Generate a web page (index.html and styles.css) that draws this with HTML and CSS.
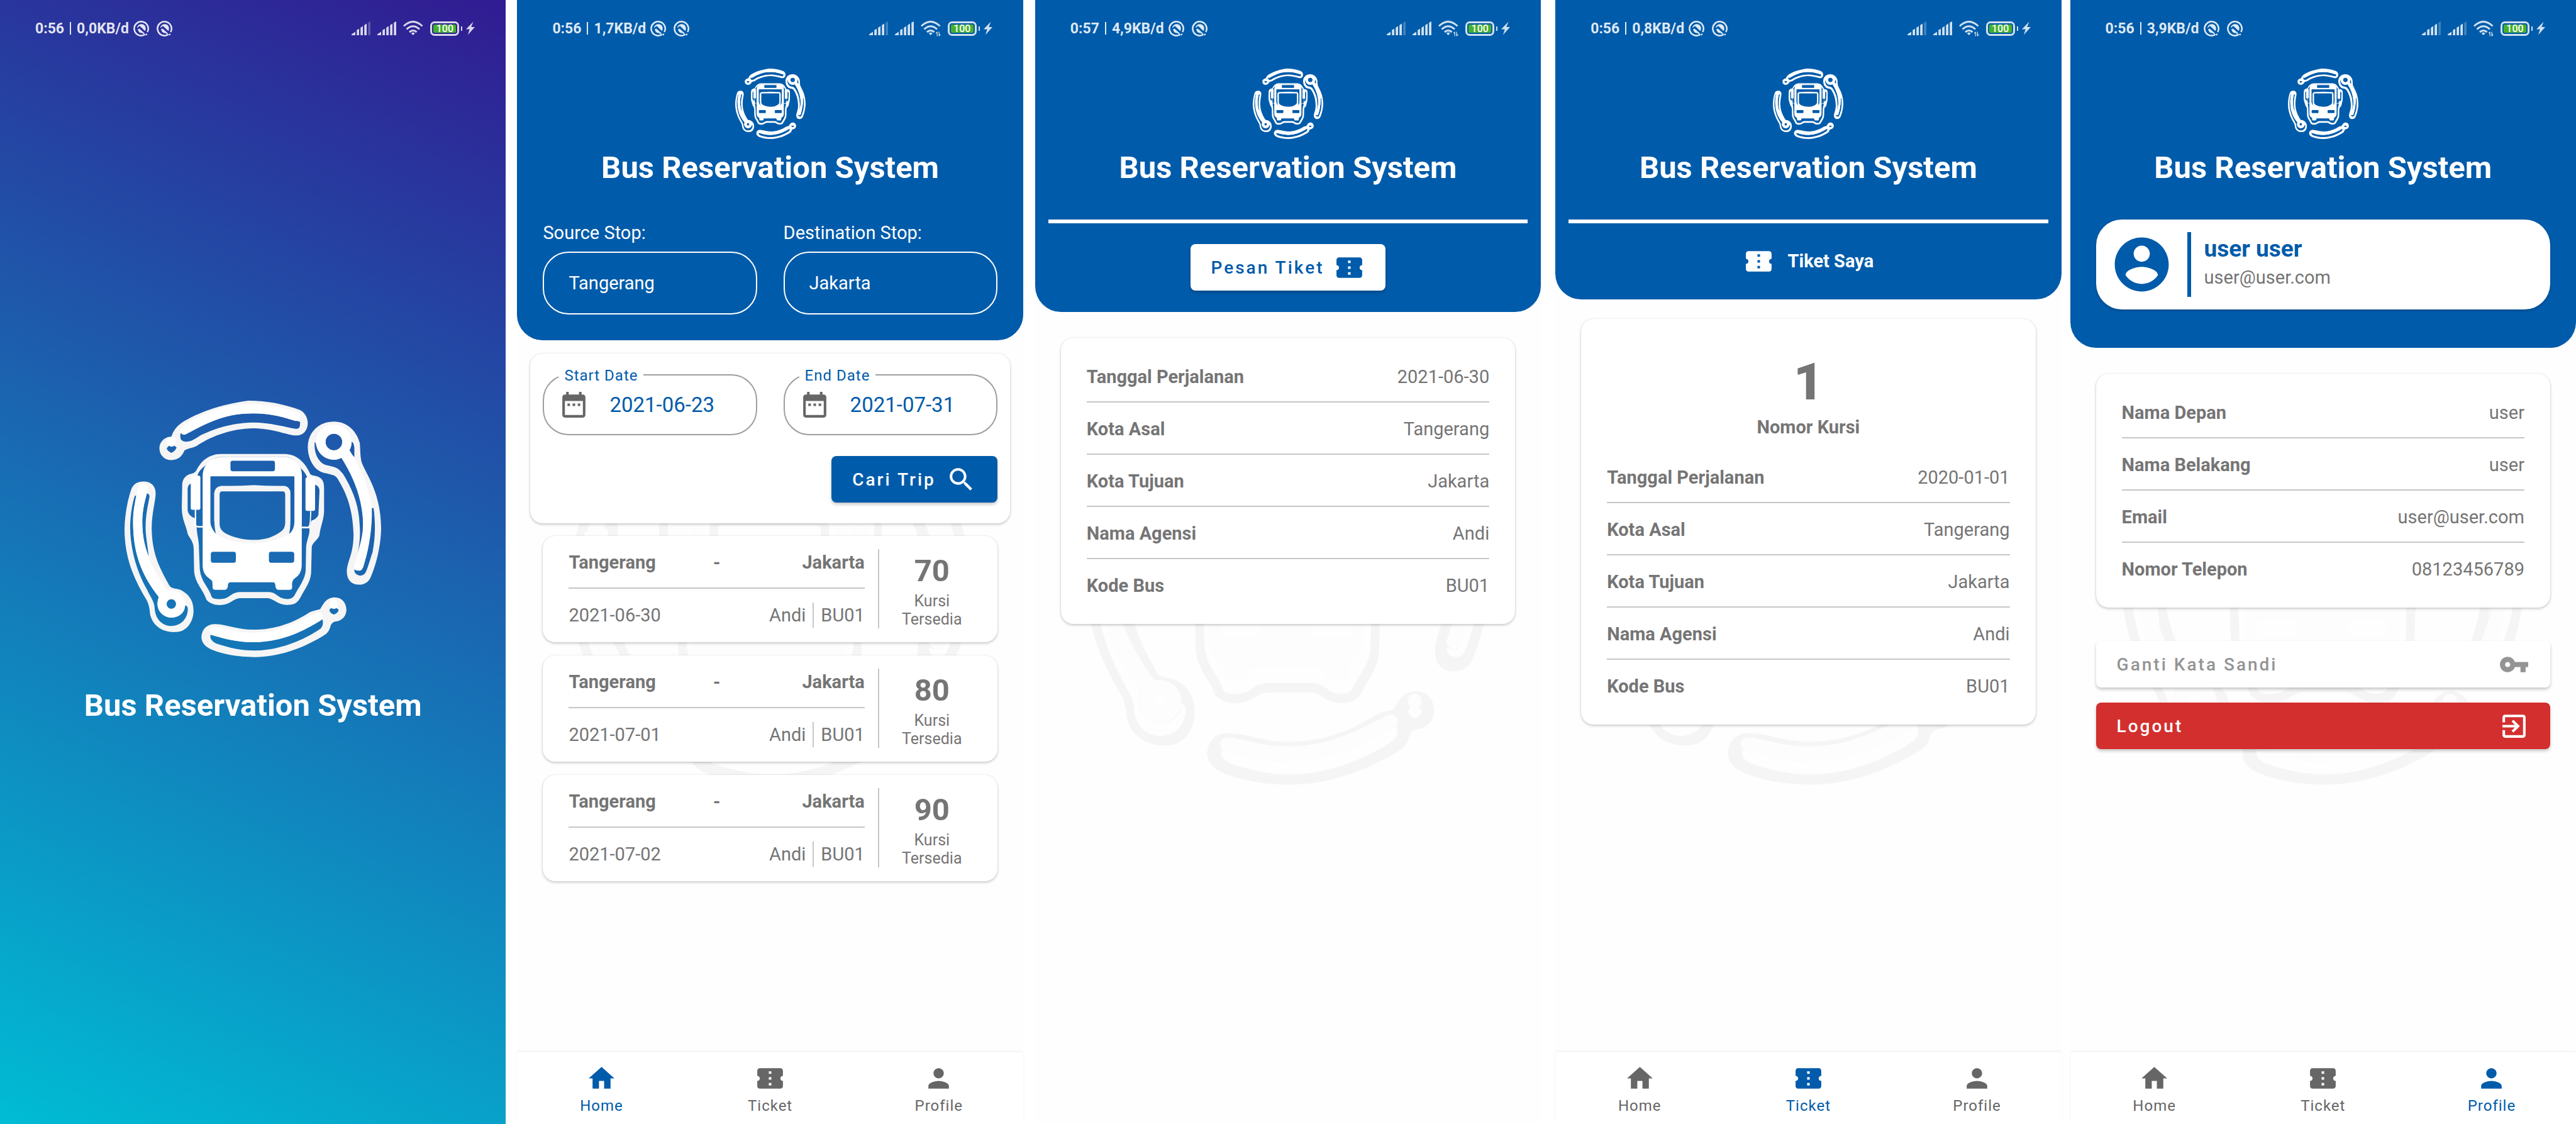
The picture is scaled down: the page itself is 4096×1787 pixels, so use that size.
FILE: index.html
```html
<!DOCTYPE html>
<html lang="id">
<head>
<meta charset="utf-8">
<title>Bus Reservation System</title>
<link rel="stylesheet" href="styles.css">
</head>
<body>
<svg class="defs" aria-hidden="true">
  <symbol id="logo" viewBox="148 107 1228 1106" preserveAspectRatio="none">
    <g class="logo-line" fill-rule="evenodd">
      <path d="M372 262Q385 225 420 203C500 158 600 125 740 107C830 107 910 122 985 146C1010 156 1025 178 1025 205C1023 240 1000 258 965 257C930 256 860 226 760 226C660 228 570 258 505 295C480 313 455 310 435 322C422 348 405 363 372 363C338 363 315 340 315 312C315 285 340 262 372 262ZM415 250C500 205 620 162 762 162C850 162 920 180 975 195Q985 195 988 200Q990 232 968 228C920 222 850 201 760 201C650 203 570 232 515 255C480 275 465 285 440 284Q415 282 415 262ZM350 312L362 300Q373 310 385 300L397 308Q395 320 373 332Q352 325 350 312Z"/>
      <path d="M1150 197C1215 197 1260 240 1274 290C1277 320 1275 340 1282 370C1300 420 1376 500 1376 660C1374 740 1350 820 1325 870C1315 890 1295 900 1270 900C1235 900 1212 880 1212 845C1212 800 1245 770 1244 680C1240 580 1215 510 1165 440C1150 420 1110 425 1080 410C1045 390 1025 350 1025 305C1027 240 1080 197 1150 197ZM1058 285L1063 290C1070 330 1100 360 1150 362C1170 362 1180 355 1185 352L1200 368C1260 440 1295 560 1289 650C1287 700 1270 740 1263 765C1275 720 1277 680 1273 640C1270 560 1240 490 1195 425C1165 385 1140 395 1100 380C1065 360 1055 320 1058 285ZM1233 283Q1245 285 1248 310L1248 350Q1232 335 1224 325Q1222 315 1233 300ZM1332 570L1340 570C1350 640 1348 700 1335 760C1320 800 1312 830 1300 850C1290 865 1262 865 1250 848L1247 835Q1262 842 1280 838Q1290 830 1297 800C1320 740 1330 650 1332 570ZM1110 285A40 36 0 1 0 1190 285A40 36 0 1 0 1110 285Z"/>
      <path d="M240 455C275 455 297 475 297 505C297 540 278 590 278 660C280 760 310 820 360 900C375 925 400 910 430 930C465 950 480 980 478 1020C475 1065 440 1105 395 1104C330 1108 280 1075 270 1025C268 1000 265 985 250 960C190 870 148 780 148 660C150 590 165 530 180 490C190 465 210 455 240 455ZM197 518L205 515C190 580 188 600 189 640C192 740 215 850 313 950C305 965 305 985 306 990C310 1020 340 1042 372 1042C410 1042 437 1020 438 990Q450 990 451 1005C450 1050 415 1078 372 1078C330 1078 295 1050 292 1000C290 970 270 950 255 920C210 850 175 750 175 650C176 600 185 550 197 518ZM252 507Q265 505 268 520C260 560 248 600 249 660C250 700 262 750 263 778C240 720 233 680 233 630C233 590 243 540 252 507ZM349 983A23 21 0 1 0 395 983A23 21 0 1 0 349 983Z"/>
      <path d="M1153 955C1190 955 1210 980 1210 1010C1208 1040 1185 1058 1155 1059Q1142 1062 1135 1075C1130 1095 1122 1108 1105 1117C1020 1165 900 1212 770 1212C690 1212 620 1200 565 1180C535 1168 516 1150 516 1125C518 1090 545 1068 585 1070C640 1072 690 1094 760 1094C870 1094 950 1065 1020 1027C1050 1008 1070 1012 1085 1005C1100 985 1110 957 1153 955ZM560 1116C620 1130 680 1148 760 1148C880 1148 980 1110 1095 1050Q1103 1075 1085 1090C1020 1130 900 1184 770 1184C700 1184 650 1172 590 1155C565 1145 555 1132 560 1116ZM1128 1008L1138 1000Q1150 1006 1162 1000L1173 1008Q1170 1022 1150 1029Q1130 1022 1128 1008Z"/>
      <path d="M610 337H915C970 338 1010 370 1035 420C1040 432 1060 428 1075 435C1098 445 1103 460 1103 485V580C1103 620 1085 650 1080 690C1070 710 1045 720 1044 740L1041 850C1038 890 1010 920 990 955C975 980 960 988 920 987C880 985 860 960 835 958H700C665 960 660 985 605 988C575 988 555 980 540 965C525 920 485 895 481 840L479 745C478 710 455 695 450 680C445 650 422 620 422 570L424 470C425 440 445 425 475 420C495 415 490 400 520 370C550 345 580 337 610 337ZM620 349Q570 349 538 384Q500 410 497 430L465 465Q450 470 450 490V580Q455 605 485 614L493 652C495 690 505 710 504 740L508 830C512 885 550 910 562 945C565 960 580 962 605 962C655 962 650 935 700 932H840C880 935 880 960 925 962C940 962 955 960 965 940C985 905 1010 880 1015 840L1017 740C1018 710 1038 680 1032 657L1042 624Q1065 620 1076 600L1081 495Q1080 475 1062 470L1022 437Q1010 412 990 398C975 370 950 350 905 349Z"/>
      <path d="M610 474Q680 476 768 471Q850 476 915 474Q942 480 942 505V620Q942 660 935 684C880 710 830 722 768 722C700 722 640 710 585 682Q578 650 577 620V505Q580 478 610 474ZM615 498Q603 498 603 512V640Q604 665 630 678C670 697 720 707 768 707C820 707 860 695 895 672Q916 660 917 635V512Q917 498 905 498Z"/>
    </g>
    <g class="logo-solid" fill-rule="evenodd">
      <path d="M425 218C500 175 600 122 760 122C840 122 920 140 980 158Q992 168 986 185Q978 197 962 194C900 176 850 162 762 162C640 162 560 195 440 253Q420 258 415 238Q415 225 425 218Z"/>
      <circle cx="373" cy="284" r="21"/>
      <path d="M1065 285A85 76 0 1 0 1235 285A85 76 0 1 0 1065 285ZM1110 285A40 36 0 1 0 1190 285A40 36 0 1 0 1110 285Z"/>
      <path d="M1185 352L1226 322C1290 420 1330 500 1332 600C1330 690 1310 770 1290 825Q1280 842 1262 838Q1245 830 1248 815C1262 770 1290 720 1290 650C1290 530 1240 430 1185 352Z"/>
      <path d="M238 463Q260 465 260 485C255 520 233 560 233 635C235 740 270 820 355 925L313 955C220 850 190 750 189 640C190 580 200 530 212 485Q220 463 238 463Z"/>
      <path d="M306 983A66 59 0 1 0 438 983A66 59 0 1 0 306 983ZM349 983A23 21 0 1 0 395 983A23 21 0 1 0 349 983Z"/>
      <path d="M585 1082C640 1090 690 1107 765 1107C880 1105 950 1075 1065 1022Q1090 1012 1098 1035Q1100 1045 1085 1055C980 1115 880 1148 760 1148C690 1147 630 1135 570 1118Q553 1112 556 1095Q562 1080 585 1082Z"/>
      <circle cx="1150" cy="983" r="21"/>
      <rect x="465" y="430" width="46" height="147" rx="8"/>
      <rect x="1014" y="438" width="46" height="144" rx="8"/>
      <path d="M484 577H491V640Q491 647 500 647H524V654H500Q484 654 484 640ZM1036 583H1042Q1040 658 1030 657H996V650H1026Q1036 650 1036 583Z"/>
      <path d="M620 349H905C960 351 997 380 997 430L996 820Q995 855 960 875Q948 885 950 905Q952 922 940 922H885Q872 922 870 905Q870 892 860 890H655Q645 890 643 900Q643 920 630 922H585Q572 923 570 915L568 885C555 870 525 865 522 820V430C525 380 560 351 620 349ZM665 366Q655 366 655 376V402Q655 411 665 411H858Q868 411 868 402V376Q868 366 858 366ZM562 433Q559 433 559 437V630Q560 655 585 680C640 708 700 720 768 720C830 720 880 708 935 682Q960 665 961 630V437Q961 433 957 433ZM573 758Q561 758 561 768V795Q561 806 573 806H670Q681 806 681 795V768Q681 758 670 758ZM850 758Q839 758 839 768V795Q839 806 850 806H948Q960 806 960 795V768Q960 758 948 758Z"/>
    </g>
  </symbol>
  <symbol id="app-dot" viewBox="0 0 100 100">
    <path d="M75 87A44.500 44.500 0 1 1 89 72" fill="none" stroke="currentColor" stroke-width="10"/>
    <path d="M24 42A28 28 0 1 1 74 65L44 36Q38 32 33 38L25 46ZM28 54L38 50L72 80L66 86L56 78Q34 80 28 54ZM76 88L84 80L90 88L82 94Z" fill="currentColor"/>
  </symbol>
  <symbol id="signal" viewBox="0 0 120 88">
    <path d="M0 88V82L24 66V88ZM33 88V55L48 47V88ZM57 88V40L72 30V88ZM81 88V24L96 14V88Z" fill="currentColor"/>
    <path class="signal-last" d="M105 88V8L120 0V88Z" fill="currentColor"/>
  </symbol>
  <symbol id="wifi" viewBox="0 0 128 100">
    <g fill="none" stroke="currentColor" stroke-width="12"><path d="M4 34Q63 -22 122 34"/><path d="M22 54Q63 16 104 54"/><path d="M40 72Q63 52 86 72"/></g>
    <path d="M51 80Q63 68 75 80L63 92Z" fill="currentColor"/>
  </symbol>
  <symbol id="wifi-data" viewBox="0 0 128 100">
    <use href="#wifi" width="128" height="100"/>
    <path d="M102 98V70L94 80H102ZM107 98V70H102V98ZM114 70V98H119V70ZM119 98L128 86H119Z" fill="currentColor"/>
  </symbol>
  <symbol id="bolt" viewBox="0 0 58 88"><path d="M48 0L0 50H24L12 88L58 36H34Z" fill="currentColor"/></symbol>
  <symbol id="date" viewBox="0 0 24 24"><path fill="currentColor" d="M9 11H7v2h2v-2zm4 0h-2v2h2v-2zm4 0h-2v2h2v-2zm2-7h-1V2h-2v2H8V2H6v2H5c-1.110 0-1.990.9-1.990 2L3 20c0 1.100.89 2 2 2h14c1.100 0 2-.9 2-2V6c0-1.100-.9-2-2-2zm0 16H5V9h14v11z"/></symbol>
  <symbol id="search" viewBox="0 0 24 24"><path fill="currentColor" d="M15.500 14h-.79l-.28-.27C15.410 12.590 16 11.110 16 9.500 16 5.910 13.090 3 9.500 3S3 5.910 3 9.500 5.910 16 9.500 16c1.610 0 3.090-.59 4.230-1.570l.27.28v.79l5 4.990L20.490 19l-4.990-5zm-6 0C7.010 14 5 11.990 5 9.500S7.010 5 9.500 5 14 7.010 14 9.500 11.990 14 9.500 14z"/></symbol>
  <symbol id="ticket" viewBox="0 0 24 24"><path fill="currentColor" d="M22 10V6c0-1.110-.9-2-2-2H4c-1.100 0-1.990.89-1.990 2v4c1.100 0 1.990.9 1.990 2s-.89 2-2 2v4c0 1.100.9 2 2 2h16c1.100 0 2-.9 2-2v-4c-1.100 0-2-.9-2-2s.9-2 2-2zm-9 7.500h-2v-2h2v2zm0-4.500h-2v-2h2v2zm0-4.500h-2v-2h2v2z"/></symbol>
  <symbol id="home" viewBox="0 0 24 24"><path fill="currentColor" d="M10 20v-6h4v6h5v-8h3L12 3 2 12h3v8z"/></symbol>
  <symbol id="person" viewBox="0 0 24 24"><path fill="currentColor" d="M12 12c2.210 0 4-1.790 4-4s-1.790-4-4-4-4 1.790-4 4 1.790 4 4 4zm0 2c-2.670 0-8 1.340-8 4v2h16v-2c0-2.660-5.330-4-8-4z"/></symbol>
  <symbol id="account" viewBox="0 0 24 24"><path fill="currentColor" d="M12 2C6.480 2 2 6.480 2 12s4.480 10 10 10 10-4.480 10-10S17.520 2 12 2zm0 3c1.660 0 3 1.340 3 3s-1.340 3-3 3-3-1.340-3-3 1.340-3 3-3zm0 14.200c-2.500 0-4.710-1.280-6-3.220.03-1.990 4-3.080 6-3.080 1.990 0 5.970 1.090 6 3.080-1.290 1.940-3.500 3.220-6 3.220z"/></symbol>
  <symbol id="key" viewBox="0 0 24 24"><path fill="currentColor" d="M12.650 10C11.830 7.670 9.610 6 7 6c-3.310 0-6 2.690-6 6s2.690 6 6 6c2.610 0 4.830-1.670 5.650-4H17v4h4v-4h2v-4H12.650zM7 14c-1.100 0-2-.9-2-2s.9-2 2-2 2 .9 2 2-.9 2-2 2z"/></symbol>
  <symbol id="exit" viewBox="0 0 24 24"><path fill="currentColor" d="M10.090 15.590L11.500 17l5-5-5-5-1.410 1.410L12.670 11H3v2h9.670l-2.580 2.590zM19 3H5c-1.110 0-2 .9-2 2v4h2V5h14v14H5v-4H3v4c0 1.100.89 2 2 2h14c1.100 0 2-.9 2-2V5c0-1.100-.9-2-2-2z"/></symbol>
</svg>

<div class="board">
  <section class="phone splash">
    <div class="status">
      <span>0:56</span><i class="bar"></i><span class="rate">0,0KB/d</span>
      <svg class="dot"><use href="#app-dot"/></svg><svg class="dot"><use href="#app-dot"/></svg>
      <div class="indicators">
        <svg class="signal dim"><use href="#signal"/></svg><svg class="signal"><use href="#signal"/></svg>
        <svg class="wifi"><use href="#wifi"/></svg>
        <span class="battery"><b>100</b></span><svg class="bolt"><use href="#bolt"/></svg>
      </div>
    </div>
    <div class="splash-body">
      <svg class="splash-logo"><use href="#logo"/></svg>
      <h1 class="title">Bus Reservation System</h1>
    </div>
  </section>

  <section class="phone">
    <svg class="watermark" aria-hidden="true"><use href="#logo"/></svg>
    <header class="header">
      <div class="status">
        <span>0:56</span><i class="bar"></i><span class="rate">1,7KB/d</span>
        <svg class="dot"><use href="#app-dot"/></svg><svg class="dot"><use href="#app-dot"/></svg>
        <div class="indicators">
          <svg class="signal dim"><use href="#signal"/></svg><svg class="signal"><use href="#signal"/></svg>
          <svg class="wifi"><use href="#wifi-data"/></svg>
          <span class="battery"><b>100</b></span><svg class="bolt"><use href="#bolt"/></svg>
        </div>
      </div>
      <svg class="logo"><use href="#logo"/></svg>
      <h2 class="title">Bus Reservation System</h2>
      <div class="stops">
        <div class="stop"><label for="source">Source Stop:</label><input id="source" type="text" value="Tangerang"></div>
        <div class="stop"><label for="destination">Destination Stop:</label><input id="destination" type="text" value="Jakarta"></div>
      </div>
    </header>
    <main class="main home">
      <form class="card search">
        <div class="dates">
          <div class="date"><label for="start">Start Date</label><svg class="icon"><use href="#date"/></svg><input id="start" type="text" value="2021-06-23"></div>
          <div class="date"><label for="end">End Date</label><svg class="icon"><use href="#date"/></svg><input id="end" type="text" value="2021-07-31"></div>
        </div>
        <button class="button primary" type="button">Cari Trip<svg class="icon"><use href="#search"/></svg></button>
      </form>
      <ul class="trips">
        <li class="card trip">
          <div class="trip-info">
            <div class="route"><b>Tangerang</b><b>-</b><b>Jakarta</b></div>
            <div class="meta"><span>2021-06-30</span><span class="agency">Andi</span><span class="code">BU01</span></div>
          </div>
          <div class="seats"><b>70</b><span>Kursi Tersedia</span></div>
        </li>
        <li class="card trip">
          <div class="trip-info">
            <div class="route"><b>Tangerang</b><b>-</b><b>Jakarta</b></div>
            <div class="meta"><span>2021-07-01</span><span class="agency">Andi</span><span class="code">BU01</span></div>
          </div>
          <div class="seats"><b>80</b><span>Kursi Tersedia</span></div>
        </li>
        <li class="card trip">
          <div class="trip-info">
            <div class="route"><b>Tangerang</b><b>-</b><b>Jakarta</b></div>
            <div class="meta"><span>2021-07-02</span><span class="agency">Andi</span><span class="code">BU01</span></div>
          </div>
          <div class="seats"><b>90</b><span>Kursi Tersedia</span></div>
        </li>
      </ul>
    </main>
    <nav class="nav">
      <a class="active" href="#home"><svg class="icon"><use href="#home"/></svg>Home</a>
      <a href="#ticket"><svg class="icon"><use href="#ticket"/></svg>Ticket</a>
      <a href="#profile"><svg class="icon"><use href="#person"/></svg>Profile</a>
    </nav>
  </section>

  <section class="phone">
    <svg class="watermark" aria-hidden="true"><use href="#logo"/></svg>
    <header class="header">
      <div class="status">
        <span>0:57</span><i class="bar"></i><span class="rate">4,9KB/d</span>
        <svg class="dot"><use href="#app-dot"/></svg><svg class="dot"><use href="#app-dot"/></svg>
        <div class="indicators">
          <svg class="signal dim"><use href="#signal"/></svg><svg class="signal"><use href="#signal"/></svg>
          <svg class="wifi"><use href="#wifi-data"/></svg>
          <span class="battery"><b>100</b></span><svg class="bolt"><use href="#bolt"/></svg>
        </div>
      </div>
      <svg class="logo"><use href="#logo"/></svg>
      <h2 class="title">Bus Reservation System</h2>
      <hr class="rule">
      <button class="button light" type="button">Pesan Tiket<svg class="icon"><use href="#ticket"/></svg></button>
    </header>
    <main class="main">
      <dl class="card details">
        <div><dt>Tanggal Perjalanan</dt><dd>2021-06-30</dd></div>
        <div><dt>Kota Asal</dt><dd>Tangerang</dd></div>
        <div><dt>Kota Tujuan</dt><dd>Jakarta</dd></div>
        <div><dt>Nama Agensi</dt><dd>Andi</dd></div>
        <div><dt>Kode Bus</dt><dd>BU01</dd></div>
      </dl>
    </main>
  </section>

  <section class="phone">
    <svg class="watermark" aria-hidden="true"><use href="#logo"/></svg>
    <header class="header">
      <div class="status">
        <span>0:56</span><i class="bar"></i><span class="rate">0,8KB/d</span>
        <svg class="dot"><use href="#app-dot"/></svg><svg class="dot"><use href="#app-dot"/></svg>
        <div class="indicators">
          <svg class="signal dim"><use href="#signal"/></svg><svg class="signal"><use href="#signal"/></svg>
          <svg class="wifi"><use href="#wifi-data"/></svg>
          <span class="battery"><b>100</b></span><svg class="bolt"><use href="#bolt"/></svg>
        </div>
      </div>
      <svg class="logo"><use href="#logo"/></svg>
      <h2 class="title">Bus Reservation System</h2>
      <hr class="rule">
      <h3 class="heading"><svg class="icon"><use href="#ticket"/></svg>Tiket Saya</h3>
    </header>
    <main class="main tickets">
      <div class="card">
        <p class="seat"><strong>1</strong>Nomor Kursi</p>
        <dl class="details">
          <div><dt>Tanggal Perjalanan</dt><dd>2020-01-01</dd></div>
          <div><dt>Kota Asal</dt><dd>Tangerang</dd></div>
          <div><dt>Kota Tujuan</dt><dd>Jakarta</dd></div>
          <div><dt>Nama Agensi</dt><dd>Andi</dd></div>
          <div><dt>Kode Bus</dt><dd>BU01</dd></div>
        </dl>
      </div>
    </main>
    <nav class="nav">
      <a href="#home"><svg class="icon"><use href="#home"/></svg>Home</a>
      <a class="active" href="#ticket"><svg class="icon"><use href="#ticket"/></svg>Ticket</a>
      <a href="#profile"><svg class="icon"><use href="#person"/></svg>Profile</a>
    </nav>
  </section>

  <section class="phone">
    <svg class="watermark" aria-hidden="true"><use href="#logo"/></svg>
    <header class="header">
      <div class="status">
        <span>0:56</span><i class="bar"></i><span class="rate">3,9KB/d</span>
        <svg class="dot"><use href="#app-dot"/></svg><svg class="dot"><use href="#app-dot"/></svg>
        <div class="indicators">
          <svg class="signal dim"><use href="#signal"/></svg><svg class="signal dim"><use href="#signal"/></svg>
          <svg class="wifi"><use href="#wifi-data"/></svg>
          <span class="battery"><b>100</b></span><svg class="bolt"><use href="#bolt"/></svg>
        </div>
      </div>
      <svg class="logo"><use href="#logo"/></svg>
      <h2 class="title">Bus Reservation System</h2>
      <div class="user">
        <svg class="avatar"><use href="#account"/></svg>
        <div class="user-text"><strong>user user</strong><span>user@user.com</span></div>
      </div>
    </header>
    <main class="main">
      <dl class="card details">
        <div><dt>Nama Depan</dt><dd>user</dd></div>
        <div><dt>Nama Belakang</dt><dd>user</dd></div>
        <div><dt>Email</dt><dd>user@user.com</dd></div>
        <div><dt>Nomor Telepon</dt><dd>08123456789</dd></div>
      </dl>
      <div class="actions">
        <button class="button plain" type="button">Ganti Kata Sandi<svg class="icon"><use href="#key"/></svg></button>
        <button class="button danger" type="button">Logout<svg class="icon"><use href="#exit"/></svg></button>
      </div>
    </main>
    <nav class="nav">
      <a href="#home"><svg class="icon"><use href="#home"/></svg>Home</a>
      <a href="#ticket"><svg class="icon"><use href="#ticket"/></svg>Ticket</a>
      <a class="active" href="#profile"><svg class="icon"><use href="#person"/></svg>Profile</a>
    </nav>
  </section>
</div>
</body>
</html>
```
FILE: styles.css
```css
:root {
  --blue: #005baa;
  --text: #757575;
  --line: #c6c6c6;
}

* {
  box-sizing: border-box;
}

body {
  margin: 0;
  background: #fff;
  color: var(--text);
  font-family: Roboto, "Liberation Sans", sans-serif;
  font-size: 29px;
  line-height: 35px;
}

h1, h2, h3, p, ul, dl, dd {
  margin: 0;
  padding: 0;
}

button, input {
  font: inherit;
  color: inherit;
  margin: 0;
}

.defs {
  position: absolute;
  width: 0;
  height: 0;
}

/* Five screens side by side, with the gutters as tracks of their own */
.board {
  display: grid;
  grid-template-columns:
    minmax(0, 1fr) 18px minmax(0, 1fr) 19px minmax(0, 1fr)
    23px minmax(0, 1fr) 14px minmax(0, 1fr);
  min-height: 100vh;
}

.phone {
  position: relative;
  display: flex;
  flex-direction: column;
  background: #fefefe;
}

.phone:nth-child(2) { grid-column: 3; }
.phone:nth-child(3) { grid-column: 5; }
.phone:nth-child(4) { grid-column: 7; }
.phone:nth-child(5) { grid-column: 9; }

.icon {
  flex: none;
  width: 49px;
  height: 49px;
}

.logo-line { fill: var(--logo-line, #fff); }
.logo-solid { fill: var(--logo-solid, #fff); }

.watermark {
  --logo-line: #f5f5f5;
  --logo-solid: #fdfdfd;
  position: absolute;
  top: 609px;
  left: 0;
  right: 0;
  width: 639px;
  height: 639px;
  margin: 0 auto;
}

/* Status bar */
.status {
  display: flex;
  align-items: center;
  align-self: stretch;
  height: 26px;
  padding: 0 49px 0 56px;
  color: rgba(255, 255, 255, .88);
  font-size: 23px;
  font-weight: 700;
}

.bar {
  width: 2px;
  height: 20px;
  margin: 0 9px;
  background: currentColor;
}

.rate { margin-right: 7px; }

.dot {
  width: 25px;
  height: 25px;
  margin-right: 12px;
}

.indicators {
  display: flex;
  align-items: center;
  gap: 11px;
  margin-left: auto;
  color: rgba(255, 255, 255, .82);
}

.signal { width: 30px; height: 22px; }
.signal.dim { --last: .3; }
.signal-last { opacity: var(--last, 1); }
.wifi { width: 32px; height: 25px; }
.bolt { width: 14px; height: 22px; }

.battery {
  position: relative;
  width: 46px;
  height: 23px;
  padding: 2px;
  border: 3px solid currentColor;
  border-radius: 7px;
}

.battery b {
  display: block;
  border-radius: 2px;
  background: #45b02c;
  color: #fff;
  font-size: 16px;
  font-weight: 500;
  line-height: 13px;
  text-align: center;
}

.battery::after {
  content: "";
  position: absolute;
  top: 5px;
  right: -8px;
  width: 2px;
  height: 7px;
  background: currentColor;
}

/* Splash */
.splash {
  padding-top: 32px;
  background: linear-gradient(24deg, #00bcd4, #311b92);
}

.splash-body {
  flex: 1;
  display: flex;
  flex-direction: column;
  align-items: center;
  justify-content: center;
  gap: 48px;
  padding-bottom: 58px;
}

.splash-logo {
  --logo-line: #f5f5f5;
  width: 408px;
  height: 408px;
}

.title {
  color: #fff;
  font-size: 49px;
  font-weight: 700;
  line-height: 57px;
}

/* Header */
.header {
  position: relative;
  display: flex;
  flex-direction: column;
  align-items: center;
  padding-top: 32px;
  border-radius: 0 0 41px 41px;
  background: var(--blue);
  color: #fff;
}

.logo {
  width: 112px;
  height: 112px;
  margin: 51px 0 17px;
}

.header .title { margin-bottom: 54px; }

.stops {
  align-self: stretch;
  display: flex;
  gap: 42px;
  padding: 4px 41px 41px;
}

.stop {
  flex: 1;
  min-width: 0;
}

.stop label {
  display: block;
  margin-bottom: 12px;
}

.stop input {
  display: block;
  width: 100%;
  height: 100px;
  padding: 0 39px;
  border: 2px solid #fff;
  border-radius: 41px;
  background: none;
}

.rule {
  align-self: stretch;
  height: 6px;
  margin: 0 21px;
  border: 0;
  background: #fff;
}

.heading {
  display: flex;
  align-items: center;
  gap: 22px;
  padding: 36px 0;
  font-size: 29px;
  font-weight: 700;
}

.user {
  align-self: stretch;
  display: flex;
  gap: 21px;
  margin: 0 41px 61px;
  padding: 20px 21px;
  border-radius: 41px;
  background: #fff;
  box-shadow: 0 2px 4px rgba(0, 0, 0, .2);
  color: var(--blue);
}

.avatar {
  flex: none;
  width: 103px;
  height: 103px;
}

.user-text {
  display: flex;
  flex-direction: column;
  gap: 6px;
  padding: 5px 0 0 21px;
  border-left: 6px solid var(--blue);
}

.user-text strong {
  font-size: 37px;
  line-height: 44px;
}

.user-text span { color: var(--text); }

/* Content */
.main {
  position: relative;
  flex: 1;
  padding: 41px 41px 0;
}

.main.home { padding: 21px 21px 0; }
.main.tickets { padding-top: 31px; }

.card {
  border-radius: 20px;
  background: #fff;
  box-shadow: 0 2px 4px rgba(0, 0, 0, .2), 0 0 2px rgba(0, 0, 0, .12);
}

.search {
  display: flex;
  flex-direction: column;
  gap: 33px;
  padding: 33px 20px;
}

.dates {
  display: flex;
  gap: 42px;
}

.date {
  position: relative;
  flex: 1;
  display: flex;
  align-items: center;
  gap: 32px;
  min-width: 0;
  height: 97px;
  padding-left: 23px;
  border: 2px solid #9e9e9e;
  border-radius: 41px;
  color: #666;
}

.date label {
  position: absolute;
  top: -14px;
  left: 23px;
  padding: 0 9px;
  background: #fff;
  color: var(--blue);
  font-size: 24px;
  letter-spacing: 1px;
  line-height: 29px;
}

.date input {
  min-width: 0;
  padding: 0;
  border: 0;
  background: none;
  color: var(--blue);
  font-size: 33px;
}

.button {
  display: flex;
  align-items: center;
  justify-content: space-between;
  gap: 16px;
  height: 74px;
  padding: 0 33px;
  border: 0;
  border-radius: 8px;
  box-shadow: 0 3px 5px rgba(0, 0, 0, .22);
  font-size: 28px;
  font-weight: 500;
  letter-spacing: 3px;
}

.primary {
  align-self: flex-end;
  background: var(--blue);
  color: #fff;
}

.light {
  margin: 33px 0 34px;
  background: #fff;
  color: var(--blue);
}

.plain {
  background: #fff;
  color: #949494;
}

.danger {
  background: #d32f2f;
  color: #fff;
}

.trips {
  display: grid;
  gap: 21px;
  padding: 20px 20px 0;
  list-style: none;
}

.trip {
  display: flex;
  gap: 21px;
  padding: 21px 20px 22px 41px;
}

.trip-info { flex: 1; }

.route {
  display: grid;
  grid-template-columns: 1fr auto 1fr;
  padding: 4px 0 22px;
  border-bottom: 2px solid var(--line);
}

.route b:last-child { text-align: right; }

.meta {
  display: flex;
  padding-top: 22px;
  line-height: 40px;
}

.agency {
  margin-left: auto;
  padding-right: 11px;
}

.code {
  padding-left: 11px;
  border-left: 2px solid var(--line);
}

.seats {
  width: 170px;
  padding: 6px 24px 0;
  border-left: 2px solid var(--line);
  font-size: 25px;
  line-height: 29px;
  text-align: center;
}

.seats b {
  display: block;
  margin-bottom: 5px;
  font-size: 49px;
  line-height: 57px;
}

.details { padding: 20px 41px 22px; }

.details div {
  display: flex;
  justify-content: space-between;
  padding: 25px 0 21px;
  border-bottom: 2px solid var(--line);
}

.details div:last-child { border-bottom: 0; }

dt { font-weight: 700; }

.seat {
  padding: 52px 0 0;
  font-weight: 700;
  text-align: center;
}

.seat strong {
  display: block;
  margin-bottom: 7px;
  font-size: 82px;
  line-height: 96px;
}

.actions {
  display: flex;
  flex-direction: column;
  gap: 24px;
  padding-top: 53px;
}

/* Bottom navigation */
.nav {
  position: relative;
  display: flex;
  height: 114px;
  background: #fff;
  box-shadow: 0 -2px 4px rgba(0, 0, 0, .05);
}

.nav a {
  flex: 1;
  display: flex;
  flex-direction: column;
  align-items: center;
  gap: 5px;
  padding-top: 17px;
  color: #666;
  font-size: 24px;
  letter-spacing: 1px;
  line-height: 29px;
  text-decoration: none;
}

.nav .active { color: var(--blue); }
```
